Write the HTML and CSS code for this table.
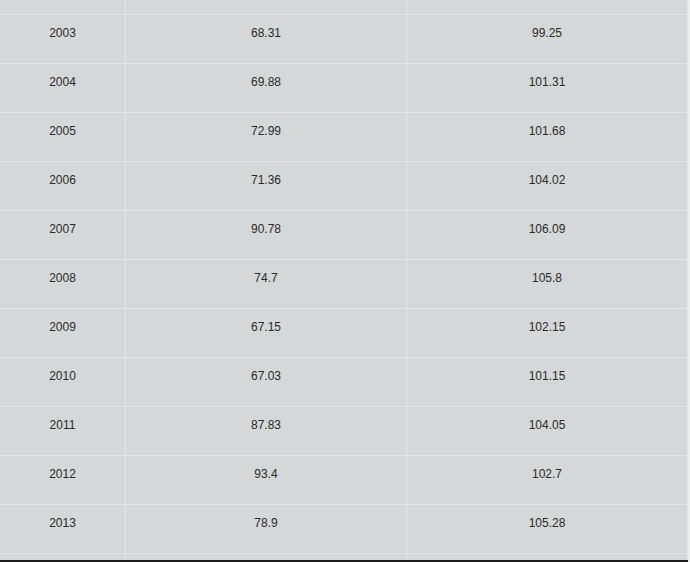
FILE: index.html
```html
<!DOCTYPE html>
<html>
<head>
<meta charset="utf-8">
<link rel="stylesheet" href="styles.css">
</head>
<body>
<div class="table">
  <div class="row row-top"><div class="cell"></div><div class="cell"></div><div class="cell"></div></div>
  <div class="row"><div class="cell">2003</div><div class="cell">68.31</div><div class="cell">99.25</div></div>
  <div class="row"><div class="cell">2004</div><div class="cell">69.88</div><div class="cell">101.31</div></div>
  <div class="row"><div class="cell">2005</div><div class="cell">72.99</div><div class="cell">101.68</div></div>
  <div class="row"><div class="cell">2006</div><div class="cell">71.36</div><div class="cell">104.02</div></div>
  <div class="row"><div class="cell">2007</div><div class="cell">90.78</div><div class="cell">106.09</div></div>
  <div class="row"><div class="cell">2008</div><div class="cell">74.7</div><div class="cell">105.8</div></div>
  <div class="row"><div class="cell">2009</div><div class="cell">67.15</div><div class="cell">102.15</div></div>
  <div class="row"><div class="cell">2010</div><div class="cell">67.03</div><div class="cell">101.15</div></div>
  <div class="row"><div class="cell">2011</div><div class="cell">87.83</div><div class="cell">104.05</div></div>
  <div class="row"><div class="cell">2012</div><div class="cell">93.4</div><div class="cell">102.7</div></div>
  <div class="row"><div class="cell">2013</div><div class="cell">78.9</div><div class="cell">105.28</div></div>
  <div class="row row-bottom"><div class="cell"></div><div class="cell"></div><div class="cell"></div></div>
  <div class="footer-bar"></div>
</div>
</body>
</html>
```
FILE: styles.css
```css
html, body {
  margin: 0;
  padding: 0;
  background: #eceeee;
  overflow: hidden;
}
body {
  font-family: "Liberation Sans", Arial, sans-serif;
  font-size: 12px;
  color: #2a2a2a;
}
.table {
  width: 688px;
  background: #d4d8d9;
}
.row {
  display: grid;
  grid-template-columns: 126px 281px 281px;
  height: 49px;
  box-sizing: border-box;
  border-bottom: 1px solid #e3e6e7;
}
.cell {
  box-sizing: border-box;
  border-right: 1px solid #e3e6e7;
  text-align: center;
  padding-top: 11px;
  line-height: 14px;
}
.row-top {
  height: 15px;
}
.row-bottom {
  height: 6px;
  border-bottom: none;
}
.row-top .cell,
.row-bottom .cell {
  padding: 0;
}
.footer-bar {
  height: 2px;
  background: #1c1c1c;
}
```
